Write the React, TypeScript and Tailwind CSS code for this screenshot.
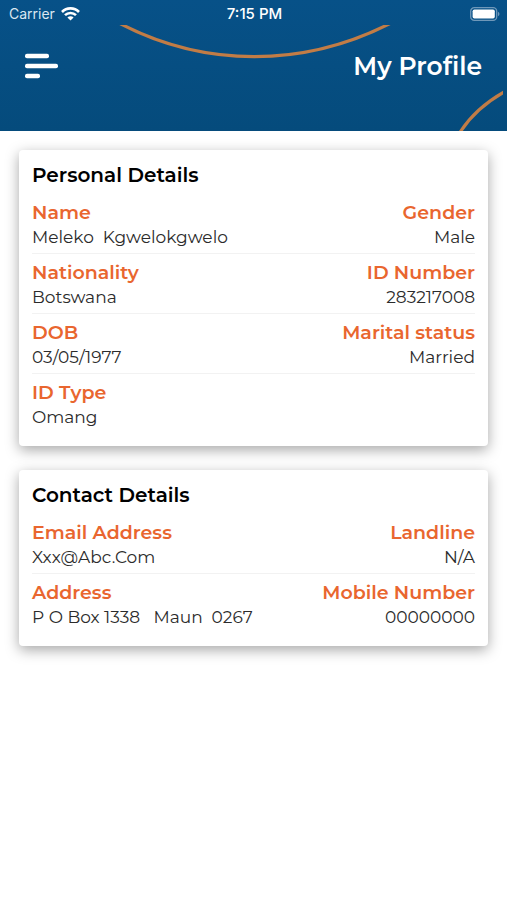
interface Field {
  label: string
  value: string
}

const personalRows: Field[][] = [
  [
    { label: "Name", value: "Meleko  Kgwelokgwelo" },
    { label: "Gender", value: "Male" },
  ],
  [
    { label: "Nationality", value: "Botswana" },
    { label: "ID Number", value: "283217008" },
  ],
  [
    { label: "DOB", value: "03/05/1977" },
    { label: "Marital status", value: "Married" },
  ],
  [{ label: "ID Type", value: "Omang" }],
]

const contactRows: Field[][] = [
  [
    { label: "Email Address", value: "Xxx@Abc.Com" },
    { label: "Landline", value: "N/A" },
  ],
  [
    { label: "Address", value: "P O Box 1338   Maun  0267" },
    { label: "Mobile Number", value: "00000000" },
  ],
]

function WifiIcon() {
  return (
    <svg width="19" height="14" viewBox="0 0 19 14" fill="none" stroke="#fff" strokeWidth="2.6" aria-hidden="true">
      <path d="M1 5 C5.6 0.2 13.4 0.2 18 5" />
      <path d="M4 8.2 C7 5.2 12 5.2 15 8.2" />
      <path d="M9.5 13.6 L6.4 10.5 C8.2 8.8 10.8 8.8 12.6 10.5 Z" fill="#fff" stroke="none" />
    </svg>
  )
}

function BatteryIcon() {
  return (
    <svg width="30" height="14" viewBox="0 0 30 14" aria-hidden="true">
      <rect x="0.7" y="0.7" width="26" height="12.6" rx="3.6" fill="none" stroke="#6f98b9" strokeWidth="1.3" />
      <rect x="2.6" y="2.4" width="22.2" height="9.2" rx="1.8" fill="#fff" />
      <path d="M28 4.8 C30 5.6 30 8.4 28 9.2 Z" fill="#6f98b9" />
    </svg>
  )
}

function StatusBar() {
  return (
    <div className="grid h-7 grid-cols-3 items-center pr-[7px] pl-[9px] font-['Inter','Roboto',sans-serif] text-white">
      <div className="flex items-center gap-1.5 text-[#dbe7f1]">
        <span className="text-sm">Carrier</span>
        <WifiIcon />
      </div>
      <span className="text-center text-[15px] font-medium">7:15 PM</span>
      <div className="flex justify-end">
        <BatteryIcon />
      </div>
    </div>
  )
}

function Header() {
  return (
    <header className="relative h-[131px] overflow-hidden bg-linear-to-b from-[#075188] to-[#054b7c]">
      {/* Decorative arcs behind the title */}
      <svg
        className="absolute inset-0 h-full w-full"
        viewBox="0 0 507 131"
        preserveAspectRatio="none"
        fill="none"
        stroke="#c17c46"
        strokeWidth="3.2"
        aria-hidden="true"
      >
        <clipPath id="arcs">
          <rect x="0" y="25" width="503" height="106" />
        </clipPath>
        <g clipPath="url(#arcs)">
          <path d="M118 22.5 C204 68 304 68 392 22.5" />
          <path d="M459 134 Q475 108 506 91" />
        </g>
      </svg>
      <div className="relative">
        <StatusBar />
        <div className="flex h-[75px] items-center justify-between px-[25px]">
          <button type="button" aria-label="Open menu">
            <svg width="33" height="26" viewBox="0 0 33 26" fill="#fff" aria-hidden="true">
              <rect x="0" y="0.8" width="24" height="4.4" rx="2" />
              <rect x="0" y="10.8" width="33" height="4.4" rx="2" />
              <rect x="0" y="20.8" width="15" height="4.4" rx="2" />
            </svg>
          </button>
          <h1 className="text-[25px] leading-8 font-semibold text-white">My Profile</h1>
        </div>
      </div>
    </header>
  )
}

function DetailsCard({ title, rows }: { title: string; rows: Field[][] }) {
  return (
    <section className="rounded bg-white px-[13px] pt-[13px] pb-4 shadow-[0_4px_14px_rgba(0,0,0,0.35)]">
      <h2 className="mb-[7px] text-xl leading-6 font-semibold text-black">{title}</h2>
      {rows.map((row) => (
        <dl
          key={row[0].label}
          className="flex justify-between border-b border-[#f2f2f2] pt-1.5 pb-[3px] last:border-b-0 last:pb-0"
        >
          {row.map((field) => (
            <div key={field.label} className="leading-[25px] not-first:text-right">
              <dt className="text-[19px] font-semibold text-[#e9662f]">{field.label}</dt>
              <dd className="text-[17px] whitespace-pre text-[#2b2b2b]">{field.value}</dd>
            </div>
          ))}
        </dl>
      ))}
    </section>
  )
}

export default function App() {
  return (
    <div className="min-h-screen bg-white font-['Montserrat','Inter',sans-serif]">
      <Header />
      <main className="flex flex-col gap-6 px-[19px] pt-[19px] pb-6">
        <DetailsCard title="Personal Details" rows={personalRows} />
        <DetailsCard title="Contact Details" rows={contactRows} />
      </main>
    </div>
  )
}
